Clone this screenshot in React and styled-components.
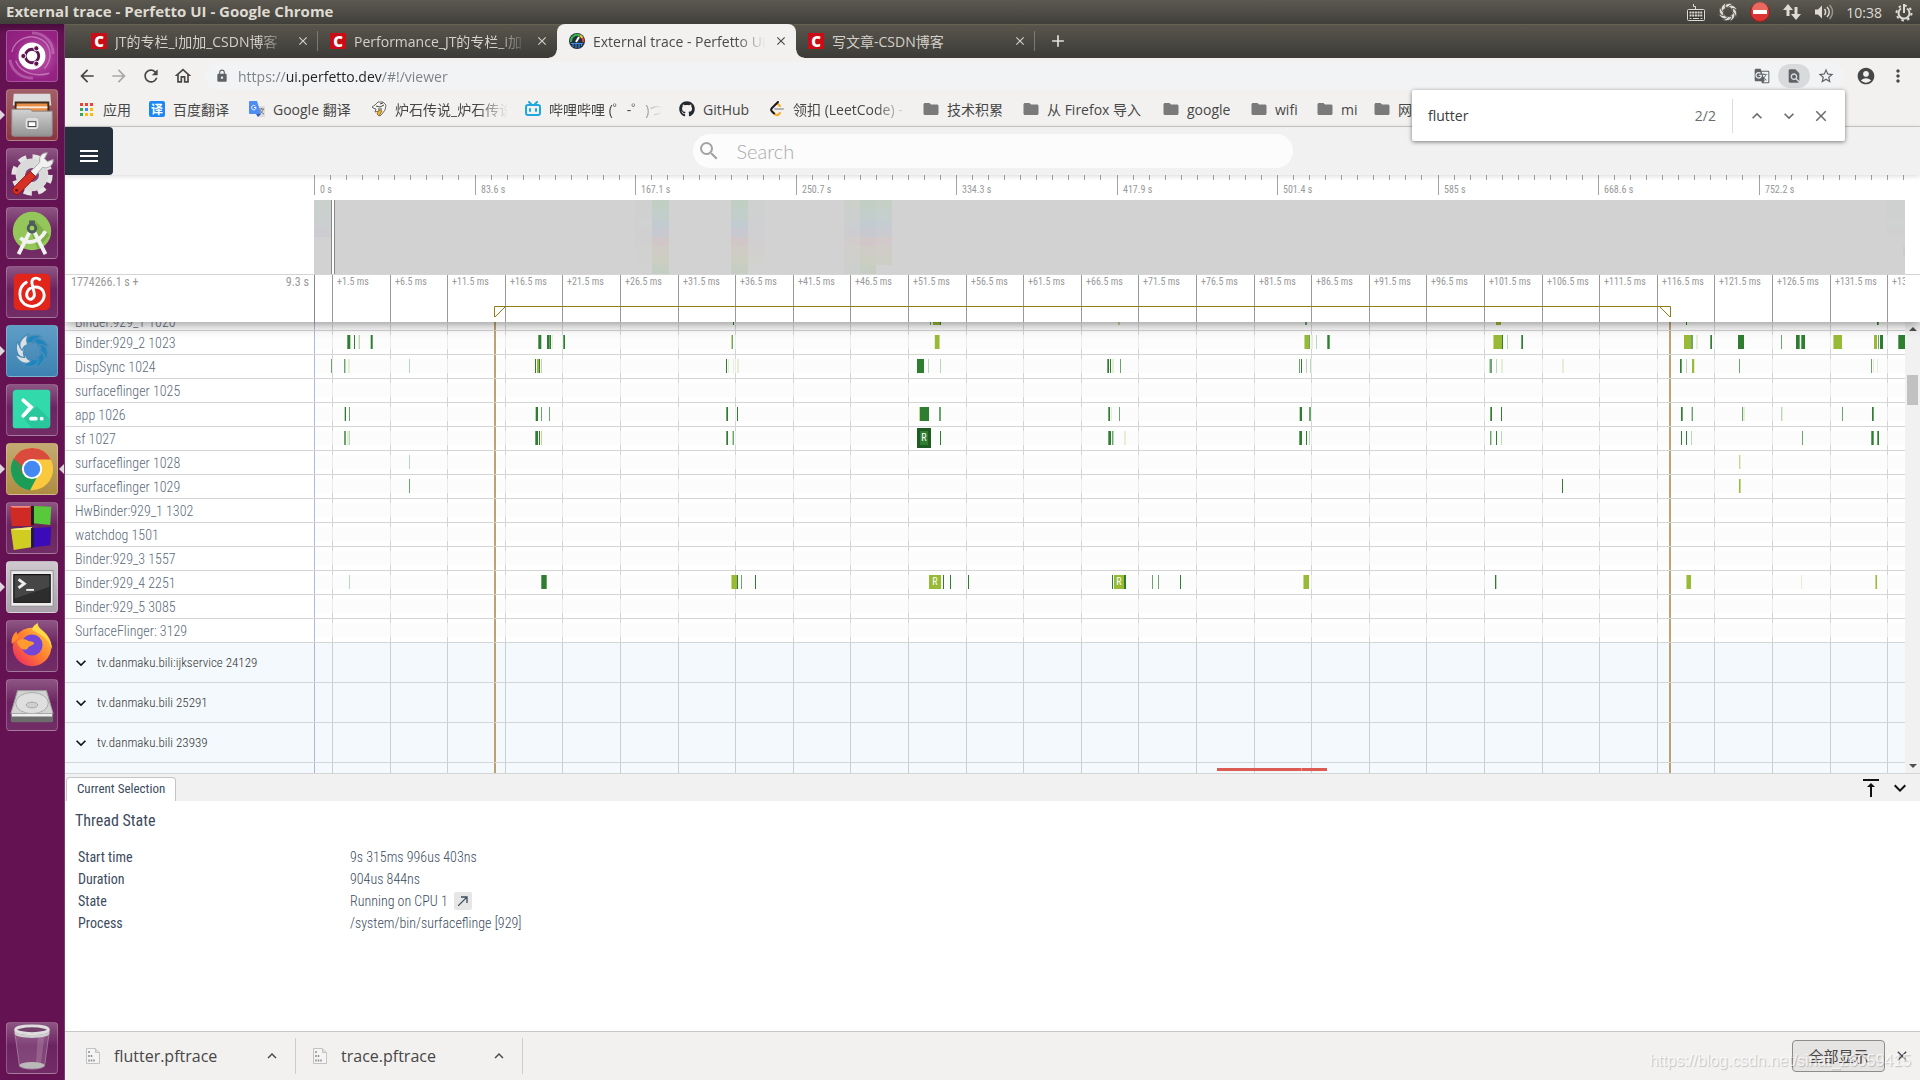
import styled, { createGlobalStyle } from 'styled-components'
import { useState } from 'react'
import { FaGithub } from 'react-icons/fa'
import {
    MdArrowBack, MdArrowForward, MdRefresh, MdOutlineHome, MdLock, MdStarBorder,
    MdAccountCircle, MdMoreVert, MdSearch, MdMenu, MdFolder, MdGTranslate,
    MdFindInPage, MdVerticalAlignTop, MdCallMade, MdKeyboardArrowUp,
    MdKeyboardArrowDown, MdClose, MdAdd
} from 'react-icons/md'

const uiFont = '"Open Sans", "Noto Sans CJK SC", sans-serif'
const traceFont = '"Roboto Condensed", "Roboto", "Noto Sans CJK SC", sans-serif'

const GlobalStyle = createGlobalStyle`
* {
    box-sizing: border-box;
}
body {
    margin: 0;
    font-family: ${uiFont};
    overflow: hidden;
}
button {
    border: 0;
    padding: 0;
    margin: 0;
    background: none;
    color: inherit;
    font: inherit;
}
a {
    color: inherit;
    text-decoration: none;
}
svg {
    display: block;
    flex: none;
}
`
const Desktop = styled.div`
display: flex;
flex-direction: column;
height: 100vh;
`
const Work = styled.div`
display: flex;
flex: 1;
min-height: 0;
`

/* ---- system bar ---- */
const SystemBar = styled.header`
display: flex;
align-items: center;
justify-content: space-between;
height: 24px;
padding: 0 6px;
background: linear-gradient(#5c5950, #403f3a);
color: #dfdbd2;
font-size: 14px;
`
const SystemTitle = styled.div`
padding-bottom: 2px;
font-size: 15px;
font-weight: 700;
`
const Indicators = styled.div`
display: flex;
align-items: center;
gap: 12px;
`

/* ---- launcher ---- */
const Launcher = styled.nav`
display: flex;
flex-direction: column;
flex: none;
gap: 7px;
width: 65px;
padding: 6px;
border-right: 1px solid #7c3c70;
background: linear-gradient(#4a0c3d, #651253 10px);
`
const LauncherItem = styled.button`
position: relative;
flex: none;
width: 52px;
height: 52px;
border: 1px solid rgba(255, 255, 255, 0.22);
border-radius: 4px;
background: ${p => p.$bg || 'linear-gradient(#8d5583, #6c2460 45%, #722c66)'};
&:last-child {
    margin-top: auto;
}
&::before {
    content: '';
    display: ${p => p.$running ? 'block' : 'none'};
    position: absolute;
    left: -7px;
    top: 20px;
    border: 5px solid transparent;
    border-left-color: #ddd6dc;
    border-right: 0;
}
&::after {
    content: '';
    display: ${p => p.$active ? 'block' : 'none'};
    position: absolute;
    right: -7px;
    top: 20px;
    border: 5px solid transparent;
    border-right-color: #ddd6dc;
    border-left: 0;
}
`

/* ---- browser ---- */
const Browser = styled.div`
display: flex;
flex-direction: column;
flex: 1;
min-width: 0;
position: relative;
background: #fff;
`
const TabStrip = styled.div`
display: flex;
align-items: center;
height: 34px;
flex: none;
padding-left: 14px;
box-shadow: inset 0 1px #66624f;
background: linear-gradient(#59564d, #3c3b37);
`
const Tab = styled.div`
position: relative;
display: flex;
align-items: center;
gap: 8px;
width: 239px;
height: 34px;
padding: 0 8px 0 12px;
border-radius: 8px 8px 0 0;
background: ${p => p.$active ? '#f2f1f0' : 'transparent'};
color: ${p => p.$active ? '#4a4a4a' : '#d4d0c8'};
font-size: 14px;
&::after {
    content: '';
    display: ${p => p.$line ? 'block' : 'none'};
    position: absolute;
    right: 0;
    top: 7px;
    height: 20px;
    border-right: 1px solid #7d7a70;
}
`
const Flare = styled.span`
position: absolute;
bottom: 0;
width: 8px;
height: 8px;
${p => p.$side}: -8px;
background: radial-gradient(circle at ${p => p.$side === 'left' ? '0 0' : '8px 0'}, transparent 7px, #f2f1f0 8px);
`
const Fade = styled.span`
flex: 1;
min-width: 0;
overflow: hidden;
white-space: nowrap;
mask-image: linear-gradient(to left, transparent, #000 30px);
`
const PlainTitle = styled.span`
flex: 1;
white-space: nowrap;
`
const Csdn = styled.span`
display: flex;
align-items: center;
justify-content: center;
flex: none;
width: 16px;
height: 16px;
background: #ca0c16;
color: #fff;
font-weight: 800;
font-size: 15px;
`
const NewTab = styled.button`
margin-left: 13px;
color: #e4e1da;
`
const Toolbar = styled.div`
display: flex;
align-items: center;
flex: none;
gap: 12px;
height: 36px;
padding: 0 12px;
background: #f2f1f0;
color: #474747;
`
const ToolButton = styled.button`
color: ${p => p.$off ? '#a9a8a7' : '#474747'};
`
const Omnibox = styled.div`
display: flex;
align-items: center;
flex: 1;
height: 28px;
padding: 0 2px 0 10px;
border-radius: 14px;
background: #f1f3f4;
color: #5f6368;
`
const Address = styled.input`
flex: 1;
border: 0;
outline: 0;
padding: 0;
margin-left: 9px;
font-family: ${uiFont};
font-size: 14px;
color: #7b7f83;
background: linear-gradient(to right, #7b7f83 48px, #202124 48px, #202124 144px, #7b7f83 144px);
background-clip: text;
-webkit-text-fill-color: transparent;
`
const OmniButton = styled.button`
display: flex;
align-items: center;
justify-content: center;
width: 32px;
height: 24px;
border-radius: 12px;
background: ${p => p.$on ? '#d8dadc' : 'transparent'};
`
const Bookmarks = styled.nav`
display: flex;
align-items: center;
flex: none;
gap: 17px;
height: 33px;
padding: 0 14px 2px;
border-bottom: 1px solid #cbc9c7;
background: #f2f1f0;
overflow: hidden;
`
const Bookmark = styled.a`
display: flex;
align-items: center;
flex: none;
gap: 8px;
width: ${p => p.$w}px;
color: #474747;
font-size: 14px;
white-space: nowrap;
`
const FolderIcon = styled(MdFolder)`
width: 18px;
height: 18px;
margin: 0 -1px;
color: #7a7a7a;
`
const Translate = styled.span`
display: flex;
align-items: center;
justify-content: center;
width: 16px;
height: 16px;
flex: none;
border-radius: 2px;
background: #1b87f5;
color: #fff;
font-size: 12px;
font-weight: 700;
`
const FindBar = styled.form`
position: absolute;
right: 75px;
top: 66px;
display: flex;
align-items: center;
width: 433px;
height: 51px;
padding: 0 8px 0 16px;
border-radius: 2px;
background: #fff;
box-shadow: 0 1px 4px rgba(0, 0, 0, 0.5);
color: #6b6b6b;
font-size: 14px;
z-index: 3;
`
const FindInput = styled.input`
flex: 1;
min-width: 0;
border: 0;
outline: 0;
padding: 0;
color: #3c3c3c;
font-family: ${uiFont};
font-size: 14px;
`
const FindLine = styled.span`
height: 34px;
margin: 0 8px 0 16px;
border-right: 1px solid #dcdcdc;
`
const FindButton = styled.button`
display: flex;
justify-content: center;
width: 32px;
`

/* ---- perfetto page ---- */
const Page = styled.main`
display: flex;
flex-direction: column;
flex: 1;
min-height: 0;
font-family: ${traceFont};
`
const Topbar = styled.div`
position: relative;
display: flex;
flex: none;
height: 48px;
padding-right: 48px;
background: #f1f1f1;
box-shadow: 0 1px 5px rgba(0, 0, 0, 0.16);
z-index: 2;
`
const MenuButton = styled.button`
display: flex;
align-items: center;
justify-content: center;
width: 48px;
height: 48px;
padding-top: 10px;
border-radius: 0 4px 4px 0;
background: #262f3c;
color: #fff;
`
const Omni = styled.label`
display: flex;
align-items: center;
gap: 16px;
width: 600px;
height: 34px;
margin: 7px auto 0;
padding-left: 4px;
border-radius: 17px;
background: #fcfcfc;
color: #a3a3a3;
`
const OmniInput = styled.input`
flex: 1;
border: 0;
outline: 0;
padding: 0;
background: transparent;
font-family: "Lato", sans-serif;
font-weight: 300;
font-size: 20px;
&::placeholder {
    color: #aaa;
}
`
const Overview = styled.section`
display: flex;
flex: none;
height: 100px;
padding-right: 15px;
border-bottom: 1px solid #d5d5d5;
`
const Shell = styled.div`
flex: none;
width: 249px;
`
const TimeRow = styled.section`
position: relative;
display: flex;
flex: none;
height: 47px;
padding-right: 15px;
box-shadow: 0 2px 12px rgba(0, 0, 0, 0.45);
clip-path: inset(0 0 -16px 0);
background: #fff;
z-index: 1;
`
const TimeShell = styled(Shell)`
display: flex;
justify-content: space-between;
padding: 0 5px 0 6px;
font-size: 12px;
line-height: 14px;
color: #999;
`
const Chart = styled.svg`
flex: 1;
width: 0;
height: 100%;
font-family: ${traceFont};
font-size: 10px;
overflow: hidden;
`
const TrackArea = styled.div`
display: flex;
flex: none;
height: 451px;
`
const Tracks = styled.div`
flex: 1;
min-width: 0;
overflow: hidden;
`
const Track = styled.div`
display: flex;
height: ${p => p.$h || 24}px;
border-bottom: 1px solid #d5d5d5;
background: ${p => p.$group ? '#f3f9fc' : '#fff'};
`
const TrackName = styled(Shell)`
display: flex;
align-items: ${p => p.$low ? 'flex-end' : 'center'};
gap: 6px;
padding-left: 10px;
color: #5c6a79;
font-size: 14px;
font-weight: 300;
white-space: nowrap;
`
const GroupName = styled(TrackName)`
padding-left: 6px;
color: #333;
font-size: 13px;
& svg {
    color: #111;
}
`
const ScrollBar = styled.div`
display: flex;
flex-direction: column;
align-items: center;
justify-content: space-between;
flex: none;
width: 15px;
padding: 5px 0;
background: #f1f1f1;
`
const ScrollArrow = styled.span`
border: 4px solid transparent;
border-${p => p.$up ? 'bottom' : 'top'}-color: #505050;
border-${p => p.$up ? 'top' : 'bottom'}-width: 0;
`
const Thumb = styled.span`
width: 11px;
height: 30px;
margin-bottom: 316px;
background: #c1c1c1;
`
const DetailTabs = styled.div`
display: flex;
align-items: flex-end;
flex: none;
gap: 5px;
height: 28px;
padding: 0 8px 0 1px;
border-top: 1px solid #d5d5d5;
background: #f1f1f1;
color: #121212;
`
const DetailTab = styled.button`
height: 24px;
margin-right: auto;
padding: 0 10px 2px;
border: 1px solid #c4c4c4;
border-bottom: 0;
border-radius: 4px 4px 0 0;
background: #fff;
color: #3c4b5d;
font-size: 13px;
`
const IconButton = styled.button`
height: 27px;
`
const Details = styled.section`
flex: 1;
min-height: 0;
padding: 8px 10px;
color: #3c4b5d;
`
const DetailHead = styled.h2`
margin: 0 0 13px;
font-size: 16px;
line-height: 24px;
font-weight: 400;
`
const DetailTable = styled.table`
border-spacing: 0;
font-size: 14px;
line-height: 22px;
& th {
    width: 272px;
    padding: 0 3px;
    text-align: left;
    font-weight: 400;
}
& td {
    padding: 0 3px;
    font-weight: 300;
}
`
const StateCell = styled.span`
display: flex;
align-items: center;
gap: 6px;
`
const Jump = styled.button`
width: 18px;
height: 18px;
padding: 1px;
border-radius: 2px;
background: #e6e6e6;
`

/* ---- download shelf ---- */
const Shelf = styled.footer`
position: relative;
display: flex;
align-items: center;
flex: none;
height: 49px;
padding-right: 10px;
border-top: 1px solid #c9c7c5;
background: #f2f1f0;
color: #474747;
font-size: 16px;
`
const Download = styled.div`
display: flex;
align-items: center;
gap: 14px;
width: ${p => p.$w}px;
height: 36px;
padding: 0 14px 0 ${p => p.$pad}px;
border-right: 1px solid #cfcdcb;
`
const FileName = styled.span`
flex: 1;
`
const ShowAll = styled.button`
width: 93px;
height: 32px;
margin: 0 9px 0 auto;
padding-bottom: 2px;
border: 1px solid #8e8c8a;
border-radius: 4px;
background: #e6e4e2;
font-size: 15px;
`
const Watermark = styled.span`
position: absolute;
right: 9px;
bottom: 10px;
color: rgba(255, 255, 255, 0.75);
text-shadow: 1px 1px 1px rgba(0, 0, 0, 0.2);
font-family: "Liberation Sans", sans-serif;
font-size: 16px;
pointer-events: none;
`

// slice colours
const C = {
    G: '#2f7d31',
    M: '#6ba46d',
    P: '#bcd6bd',
    Y: '#e6eed6',
    L: '#99ba34',
    K: '#c3d98b',
    R: '#dc5b52'
}

// [x, width, colour] measured from the left edge of the timeline
const threads = [
    { name: 'Binder:929_1 1020', slices: [[419, 1, 'G'], [616, 1, 'M'], [619, 7, 'L'], [626, 1, 'G'], [804, 2, 'K'], [991, 2, 'M'], [1182, 5, 'L'], [1372, 1, 'G'], [1563, 1, 'G'], [1564, 1, 'M']] },
    { name: 'Binder:929_2 1023', slices: [[33, 1, 'M'], [34, 2, 'G'], [36, 1, 'P'], [40, 1, 'G'], [44, 1, 'Y'], [45, 1, 'P'], [56, 1, 'P'], [57, 1, 'G'], [58, 1, 'M'], [224, 1, 'M'], [225, 2, 'G'], [227, 1, 'P'], [233, 2, 'G'], [235, 1, 'M'], [236, 1, 'G'], [238, 1, 'Y'], [249, 1, 'M'], [250, 1, 'G'], [417, 1, 'K'], [418, 1, 'M'], [620, 1, 'Y'], [621, 4, 'L'], [625, 1, 'K'], [990, 1, 'K'], [991, 4, 'L'], [995, 1, 'M'], [998, 1, 'Y'], [1002, 1, 'P'], [1013, 1, 'M'], [1014, 1, 'G'], [1015, 1, 'M'], [1179, 1, 'K'], [1180, 8, 'L'], [1188, 1, 'G'], [1193, 1, 'P'], [1207, 1, 'M'], [1208, 1, 'G'], [1370, 7, 'L'], [1377, 2, 'M'], [1382, 2, 'Y'], [1396, 1, 'M'], [1397, 1, 'G'], [1424, 6, 'G'], [1467, 1, 'M'], [1482, 3, 'G'], [1485, 1, 'M'], [1487, 1, 'M'], [1488, 3, 'G'], [1519, 1, 'K'], [1520, 8, 'L'], [1560, 3, 'L'], [1564, 1, 'M'], [1566, 3, 'G'], [1584, 1, 'M'], [1585, 6, 'G']] },
    { name: 'DispSync 1024', slices: [[17, 1, 'M'], [30, 1, 'M'], [31, 1, 'P'], [34, 2, 'Y'], [95, 1, 'P'], [221, 1, 'G'], [223, 2, 'L'], [225, 1, 'G'], [227, 1, 'P'], [412, 1, 'G'], [414, 1, 'Y'], [419, 1, 'Y'], [423, 2, 'Y'], [603, 7, 'G'], [614, 1, 'P'], [626, 1, 'P'], [793, 1, 'M'], [794, 1, 'G'], [796, 1, 'G'], [798, 2, 'Y'], [806, 1, 'M'], [985, 1, 'M'], [987, 1, 'G'], [992, 1, 'P'], [996, 1, 'P'], [1175, 1, 'P'], [1176, 2, 'M'], [1182, 1, 'P'], [1187, 2, 'Y'], [1248, 2, 'Y'], [1366, 1, 'G'], [1367, 1, 'M'], [1372, 1, 'P'], [1378, 2, 'L'], [1380, 1, 'Y'], [1425, 1, 'M'], [1557, 1, 'M'], [1559, 1, 'Y'], [1563, 1, 'Y']] },
    { name: 'surfaceflinger 1025', slices: [] },
    { name: 'app 1026', slices: [[30, 1, 'P'], [31, 1, 'G'], [35, 1, 'M'], [221, 1, 'P'], [222, 2, 'G'], [227, 1, 'M'], [235, 1, 'M'], [412, 1, 'M'], [413, 1, 'G'], [423, 1, 'G'], [605, 1, 'K'], [606, 9, 'G'], [625, 2, 'M'], [794, 1, 'M'], [795, 1, 'G'], [797, 1, 'Y'], [805, 1, 'M'], [985, 1, 'P'], [986, 2, 'G'], [995, 2, 'M'], [1176, 1, 'M'], [1177, 1, 'G'], [1187, 1, 'G'], [1367, 1, 'G'], [1368, 1, 'M'], [1377, 1, 'P'], [1378, 1, 'M'], [1428, 1, 'M'], [1429, 2, 'Y'], [1467, 1, 'P'], [1468, 1, 'Y'], [1528, 1, 'M'], [1558, 1, 'G'], [1559, 1, 'M']] },
    { name: 'sf 1027', slices: [[30, 1, 'M'], [31, 1, 'M'], [33, 2, 'Y'], [35, 1, 'P'], [221, 1, 'M'], [222, 2, 'G'], [225, 1, 'G'], [227, 1, 'K'], [412, 1, 'M'], [413, 1, 'G'], [418, 1, 'P'], [419, 1, 'M'], [626, 1, 'G'], [794, 1, 'M'], [795, 2, 'G'], [798, 1, 'M'], [799, 1, 'P'], [810, 2, 'Y'], [985, 1, 'M'], [986, 2, 'G'], [992, 1, 'G'], [995, 1, 'P'], [1176, 1, 'M'], [1177, 1, 'P'], [1182, 1, 'G'], [1187, 1, 'P'], [1367, 1, 'G'], [1372, 1, 'G'], [1377, 1, 'P'], [1488, 1, 'M'], [1557, 1, 'M'], [1558, 1, 'G'], [1559, 1, 'M'], [1563, 1, 'M'], [1564, 1, 'G']], picked: 603 },
    { name: 'surfaceflinger 1028', slices: [[95, 1, 'P'], [1425, 1, 'K'], [1426, 1, 'Y']] },
    { name: 'surfaceflinger 1029', slices: [[95, 1, 'M'], [1248, 1, 'G'], [1425, 1, 'L'], [1426, 1, 'K']] },
    { name: 'HwBinder:929_1 1302', slices: [] },
    { name: 'watchdog 1501', slices: [] },
    { name: 'Binder:929_3 1557', slices: [] },
    { name: 'Binder:929_4 2251', slices: [[35, 1, 'P'], [227, 1, 'M'], [228, 4, 'G'], [232, 1, 'M'], [417, 1, 'K'], [418, 5, 'L'], [423, 1, 'G'], [427, 1, 'M'], [441, 1, 'G'], [615, 12, 'L'], [629, 1, 'G'], [636, 1, 'G'], [654, 1, 'G'], [798, 1, 'G'], [800, 10, 'L'], [810, 2, 'G'], [838, 1, 'M'], [844, 1, 'M'], [866, 1, 'G'], [989, 1, 'K'], [990, 5, 'L'], [1181, 1, 'G'], [1182, 1, 'P'], [1372, 1, 'K'], [1373, 4, 'L'], [1487, 1, 'Y'], [1561, 1, 'K'], [1562, 1, 'L']], marks: [621, 805] },
    { name: 'Binder:929_5 3085', slices: [] },
    { name: 'SurfaceFlinger: 3129', slices: [] }
]
const groups = ['tv.danmaku.bili:ijkservice 24129', 'tv.danmaku.bili 25291', 'tv.danmaku.bili 23939']
const overviewLabels = ['0 s', '83.6 s', '167.1 s', '250.7 s', '334.3 s', '417.9 s', '501.4 s', '585 s', '668.6 s', '752.2 s']
const bands = ['#bfcdc1', '#bfcdc9', '#c0cace', '#c6c6d0', '#d0c5c6', '#cecac3', '#cbcdc0', '#c4ccc1']
// [x, width, opacity, first band, last band]
const loads = [[0, 17, 0.4, 0, 3], [321, 17, 0.1, 0, 6], [338, 17, 0.9, 0, 7], [417, 17, 0.9, 0, 7], [434, 17, 0.2, 0, 6], [530, 16, 0.35, 0, 7], [546, 16, 0.9, 0, 7], [562, 16, 0.7, 0, 6], [1573, 18, 0.1, 0, 3], [1589, 2, 0.9, 5, 5]]
const bandY = i => 25 + Math.round(i * 9.25)
const tickX = Array.from({ length: 28 }, (_, k) => Math.round(18 + k * 57.6))

function GridLines({ h }) {
    return (
        <g fill="#000" fillOpacity="0.17">
            <rect x="0" width="1" height={h} fill="#9aa8c8" fillOpacity="0.8" />
            {tickX.map(x => <rect key={x} x={x} width="1" height={h} />)}
        </g>
    )
}

function AreaLines({ h }) {
    return (
        <g fill="#8a5a00" fillOpacity="0.55">
            <rect x="180" width="2" height={h} />
            <rect x="1355" width="2" height={h} />
        </g>
    )
}

function Thread({ thread, cut }) {
    return (
        <Track $h={cut ? 9 : 24}>
            <TrackName $low={cut}>{thread.name}</TrackName>
            <Chart>
                <GridLines h="24" />
                <g transform={cut ? 'translate(0 -15)' : undefined}>
                    <rect x="1" y="4" width="100%" height="14" fill="#fafafa" fillOpacity="0.6" />
                    {thread.slices.map(([x, w, c]) => <rect key={x} x={x} y="4" width={w} height="14" fill={C[c]} />)}
                    {thread.marks && thread.marks.map(x => (
                        <text key={x} x={x} y="14" textAnchor="middle" fill="#fff">R</text>
                    ))}
                    {thread.picked && (
                        <g>
                            <rect x={thread.picked} y="1" width="14" height="20" fill="#1f5c22" />
                            <rect x={thread.picked + 3} y="4" width="8" height="14" fill={C.G} />
                            <text x={thread.picked + 7} y="14" textAnchor="middle" fill="#fff">R</text>
                        </g>
                    )}
                </g>
                <AreaLines h="24" />
            </Chart>
        </Track>
    )
}

function OverviewTimeline() {
    return (
        <Overview>
            <Shell />
            <Chart>
                {Array.from({ length: 100 }, (_, k) => (
                    <rect key={k} x={Math.round(k * 16.05)} width="1" height={k % 10 ? 5 : 20} fill="#a3a3a3" />
                ))}
                {overviewLabels.map((t, k) => (
                    <text key={t} x={Math.round(k * 160.5) + 6} y="18" fill="#999">{t}</text>
                ))}
                <rect y="25" width="100%" height="75" fill="#d2d2d2" />
                {loads.map(([x, w, o, from, to]) => bands.map((c, i) => (i >= from && i <= to) && (
                    <rect key={x + c} x={x} y={bandY(i)} width={w} height={bandY(i + 1) - bandY(i)} fill={c} fillOpacity={o} />
                )))}
                <rect x="17" y="25" width="1" height="75" fill="#888" />
                <rect x="18" y="25" width="2" height="75" fill="#fff" />
                <rect x="20" y="25" width="1" height="75" fill="#888" />
            </Chart>
        </Overview>
    )
}

function TimeAxis() {
    return (
        <TimeRow>
            <TimeShell><span>1774266.1 s +</span><span>9.3 s</span></TimeShell>
            <Chart>
                <rect x="0" width="1" height="47" fill="#888" />
                {tickX.map((x, k) => (
                    <g key={x}>
                        <rect x={x} width="1" height="47" fill="#999" />
                        <text x={x + 5} y="10" fill="#999">+{k * 5 + 1}.5 ms</text>
                    </g>
                ))}
                <path d="M180.5 42V31.5H1356.5V42M181 42L191 32M1356 42L1346 32" fill="none" stroke="#917d10" />
            </Chart>
        </TimeRow>
    )
}

/* ---- small drawings ---- */
const AppsIcon = () => (
    <svg width="16" height="16">
        {['#ea4335', '#ea4335', '#ea4335', '#34a853', '#4285f4', '#fbbc05', '#34a853', '#fbbc05', '#fbbc05'].map((c, i) => (
            <rect key={i} x={1 + (i % 3) * 5} y={2 + Math.floor(i / 3) * 5} width="3" height="3" fill={c} />
        ))}
    </svg>
)
const GoogleIcon = () => (
    <svg width="16" height="16" viewBox="0 0 16 16">
        <path d="M7 5h9v11H9z" fill="#dcdcdc" />
        <path d="M10 8h5M12.500 7v1M14 8c0 2-2 4-3 5M11 9c1 2 2 3 4 4" stroke="#777" fill="none" />
        <path d="M1 0h7l4 13H1a1 1 0 0 1-1-1V1a1 1 0 0 1 1-1z" fill="#4f8df5" />
        <path d="M7 13h5l-3 3z" fill="#3457b8" />
        <path d="M7 6.500H5M7 6.500A2.200 2.200 0 1 1 6.300 5" stroke="#fff" fill="none" />
    </svg>
)
const HearthIcon = () => (
    <svg width="16" height="16" viewBox="0 0 16 16" fill="none" stroke="#6b6b6b">
        <path d="M1 6l3-2 3-3h5l3 3-1 5-3 4-2 2-2-1 1-4-4 1 1-3-3-1z" fill="#f7f5ef" />
        <path d="M5 5l4 1 4-2M9 3l3-1M7 8l4 0" stroke="#444" />
        <path d="M8 9l3 1-3 5-2-2z" fill="#e9b53a" stroke="#a1721a" />
    </svg>
)
const BiliIcon = () => (
    <svg width="16" height="16" viewBox="0 0 16 16" fill="none" stroke="#20a8de" strokeWidth="2" strokeLinecap="round">
        <rect x="1" y="4" width="14" height="10" rx="2" />
        <path d="M4 1l2 2M12 1l-2 2M5 8v2M11 8v2" />
    </svg>
)
const LeetIcon = () => (
    <svg width="16" height="16" viewBox="0 0 16 16" fill="none" strokeWidth="2" strokeLinecap="round">
        <path d="M6 8h8" stroke="#b3b1b0" />
        <path d="M11 5L9.500 3.500a2 2 0 0 0-3 0M11 12l-1.500 1.500a2 2 0 0 1-3 0L4 11" stroke="#f9a824" />
        <path d="M9 1L3 7a2.500 2.500 0 0 0 0 3.500l2 2" stroke="#1c1c1c" />
    </svg>
)
const PerfettoIcon = () => (
    <svg width="16" height="16" viewBox="0 0 16 16">
        <circle cx="8" cy="8" r="8" fill="#23303f" />
        <path d="M2 9a6 6 0 0 1 2-5.500" stroke="#39b54a" strokeWidth="2" fill="none" />
        <path d="M4 3.500a6 6 0 0 1 7-1" stroke="#39b54a" strokeWidth="2" fill="none" />
        <path d="M11 2.500A6 6 0 0 1 13.500 5" stroke="#f4c430" strokeWidth="2" fill="none" />
        <path d="M13.500 5A6 6 0 0 1 14 9" stroke="#e5432f" strokeWidth="2" fill="none" />
        <path d="M2 10.500h12M4 11v3M7 11v4M10 11v4M12.500 11v2" stroke="#3f8fe0" />
        <path d="M7 9l3-5" stroke="#fff" strokeWidth="2" />
    </svg>
)
const FileIcon = () => (
    <svg width="14" height="16" viewBox="0 0 14 16">
        <path d="M.5.500h9l4 4v11H.5z" fill="#f4f4f4" stroke="#c3c3c3" />
        <path d="M9.500.500v4h4" fill="#dedede" stroke="#c3c3c3" />
        <path d="M3 3v2M3 7v2M5.500 7v2M3 11.500v2M5.500 11.500v2M8 11.500v2" stroke="#8f8f8f" strokeWidth="1.500" />
    </svg>
)
const KeyboardIcon = () => (
    <svg width="20" height="20" viewBox="0 0 20 20" fill="none" stroke="#dfdbd2">
        <rect x="1.500" y="7.500" width="17" height="11" rx="1" fill="#3a3935" />
        <path d="M9.500 7V4.500h-2V2" />
        <path d="M3.500 10.500h13M3.500 13.500h13" strokeWidth="2" strokeDasharray="2 .7" />
        <path d="M3.500 16.500h2M7 16.500h6M14.500 16.500h2" />
    </svg>
)
function Swirl({ size, a, b, gap }) {
    return (
        <svg width={size} height={size} viewBox="0 0 40 40" stroke={gap} strokeWidth="1.500" strokeLinejoin="round">
            {[0, 1, 2, 3, 4, 5, 6, 7].map(i => (
                <path key={i} transform={`rotate(${i * 45} 20 20)`} d="M13 12C12 5 20 0 31 4c-4 1-8 3-9 8-3-2-6-2-9 0z" fill={i > 4 ? b : a} />
            ))}
        </svg>
    )
}
const NoEntry = () => (
    <svg width="20" height="20" viewBox="0 0 20 20">
        <circle cx="10" cy="10" r="9.500" fill="#dc3434" stroke="#a01c1c" />
        <path d="M2 8a8 8 0 0 1 16 0z" fill="#ee7f72" fillOpacity=".7" />
        <rect x="3" y="8" width="14" height="4" fill="#fff" />
    </svg>
)
const Network = () => (
    <svg width="20" height="18" viewBox="0 0 20 18" fill="#dfdbd2">
        <path d="M6 1l5 6H7.500v6h-3V7H1zM14 17l-5-6h3.500V4h3v7H19z" />
    </svg>
)
const Speaker = () => (
    <svg width="20" height="18" viewBox="0 0 20 18" fill="none" stroke="#dfdbd2" strokeWidth="1.500">
        <path d="M1 6.500h3l4-4v13l-4-4H1z" fill="#dfdbd2" stroke="none" />
        <path d="M10.500 6c1.500 2 1.500 4 0 6M13 4c3 3 3 7 0 10" />
        <path d="M15.500 2c4 4 4 10 0 14" strokeOpacity=".5" />
    </svg>
)
const Power = () => (
    <svg width="20" height="20" viewBox="0 0 20 20" fill="none" stroke="#dfdbd2">
        <circle cx="10" cy="11" r="7.500" strokeWidth="2" strokeDasharray="2.500 3.390" />
        <path d="M7 6.500a5.500 5.500 0 1 0 6 0M10 2v9" strokeWidth="2" />
    </svg>
)

const art = {
    dash: (
        <>
            <path d="M5 22C8 8 24 2 36 9c10 6 12 20 3 30M44 44c-14 4-30 0-35-13" fill="none" stroke="#d9a5cf" strokeOpacity=".6" strokeWidth="1.500" />
            <path d="M26 2c14 0 22 10 22 22M3 30c2 12 12 19 24 19" fill="none" stroke="#d9a5cf" strokeOpacity=".4" strokeWidth="3" />
            <circle cx="26" cy="26" r="14" fill="#fff" />
            <circle cx="26" cy="26" r="7" fill="none" stroke="#5f1550" strokeWidth="3" />
            <g fill="#5f1550" stroke="#fff"><circle cx="17" cy="26" r="2.700" /><circle cx="30.500" cy="18" r="2.700" /><circle cx="30.500" cy="34" r="2.700" /></g>
        </>
    ),
    files: (
        <>
            <path d="M7 4h38l1 12H6z" fill="#dcdcdc" />
            <path d="M8 12h36v10H8z" fill="#3a2c20" />
            <path d="M10 14h32v8H10z" fill="#e98f45" /><path d="M10 17h32v2H10z" fill="#fff" fillOpacity=".8" />
            <path d="M5 20h19l2 2h21v24a2 2 0 0 1-2 2H7a2 2 0 0 1-2-2z" fill="url(#steel)" stroke="#8c8c8c" />
            <rect x="20" y="30" width="12" height="10" rx="2" fill="#d6d6d6" stroke="#eee" />
            <rect x="22" y="33" width="8" height="5" fill="#fff" stroke="#444" />
        </>
    ),
    settings: (
        <>
            <circle cx="26" cy="27" r="18" fill="none" stroke="#e4e4e4" strokeWidth="7" strokeDasharray="8 6.137" />
            <circle cx="26" cy="27" r="12" fill="none" stroke="#dadada" strokeWidth="10" />
            <circle cx="26" cy="27" r="7" fill="#82447a" />
            <path d="M34 9a8 8 0 0 1 8-5l-3 6 3 3 6-2a8 8 0 0 1-11 8L27 31l-5-5 12-12z" fill="#f1f1f1" stroke="#a8a8a8" />
            <path d="M24 23l6 6-17 17a4 4 0 0 1-6-6z" fill="#d62f25" stroke="#931510" />
            <circle cx="10" cy="43" r="1.500" fill="#671410" />
        </>
    ),
    studio: (
        <>
            <circle cx="26" cy="24" r="20" fill="#94c659" />
            <path d="M29 13l15 15-12 15-8-20z" fill="#6fa03c" fillOpacity=".6" />
            <path d="M24 24L12 48M28 24l12 24" stroke="#f2f2f2" strokeWidth="4" />
            <path d="M14 31c6 7 19 6 26-7" fill="none" stroke="#f2f2f2" strokeWidth="4" />
            <rect x="23" y="13" width="6" height="5" fill="#505b60" />
            <circle cx="26" cy="21" r="4" fill="#9ad05a" stroke="#505b60" strokeWidth="3" />
        </>
    ),
    music: (
        <>
            <rect x="7" y="7" width="38" height="38" rx="5" fill="#e1251b" />
            <path d="M20 16c-9 5-9 20 1 24 11 4 20-6 17-14-3-7-14-7-17 0-2 5 2 9 5 7 5-3 1-9 0-16-1-5 4-7 8-4" fill="none" stroke="#fff" strokeWidth="3" strokeLinecap="round" />
        </>
    ),
    term2: (
        <>
            <path d="M10 5h32q3 0 3 3v33q0 4-4 4H9q-3 0-3-3V9q0-4 4-4z" fill="#32d9aa" />
            <path d="M17 34l14-12 14 14v5q0 4-4 4H26z" fill="#21b58e" fillOpacity=".5" />
            <path d="M17 16l8 7-8 9" fill="none" stroke="#fff" strokeWidth="4" strokeLinecap="round" />
            <path d="M25 35h5M36 35h.1" stroke="#fff" strokeWidth="4" strokeLinecap="round" />
        </>
    ),
    chrome: (
        <>
            <circle cx="26" cy="26" r="22" fill="#f9c83c" />
            <path d="M26 26L7 15A22 22 0 0 1 45.500 16H26z" fill="#da4b3e" />
            <path d="M7 15a22 22 0 0 0 17 33l9-17-14-1z" fill="#1b9c57" />
            <path d="M7 15l9 16 10-15z" fill="#da4b3e" /><path d="M7 15l11 17 8 0z" fill="#1b9c57" />
            <circle cx="26" cy="26" r="10.500" fill="#fff" />
            <circle cx="26" cy="26" r="8.500" fill="#4488f2" />
        </>
    ),
    cubes: (
        <>
            <path d="M3 3h22v21H5z" fill="#cf2a23" /><path d="M3 3h22l-2 2H6z" fill="#f08c86" />
            <path d="M28 3l18 1-1 19-17-2z" fill="#59c93c" /><path d="M25 3h3v20h-3z" fill="#241b22" />
            <path d="M4 27l22-2-1 21-18 3z" fill="#d0cc22" /><path d="M4 27l22-2-2 3H8z" fill="#eeec80" />
            <path d="M28 26l18-1-1 19-17 2z" fill="#3c0bb8" /><path d="M25 26h3v20l-3 1z" fill="#211a40" />
        </>
    ),
    term: (
        <>
            <rect x="4" y="9" width="44" height="37" fill="#ececec" stroke="#8e8e8e" />
            <rect x="7" y="13" width="38" height="29" fill="#2d2d2d" stroke="#111" />
            <path d="M8 14h36v12L8 38z" fill="#fff" fillOpacity=".12" />
            <path d="M12 18l6 4.500-6 4.500" fill="none" stroke="#eee" strokeWidth="3" />
            <path d="M20 29h8" stroke="#eee" strokeWidth="2" />
        </>
    ),
    firefox: (
        <>
            <circle cx="26" cy="27" r="20" fill="url(#fox)" />
            <path d="M26 9c1-5 5-6 6-7 0 5 4 6 7 10 1 2 8 8 8 18-3-12-12-16-21-21z" fill="#ffd94a" />
            <path d="M5 24c-1-6 2-11 5-13 0 3 2 4 3 6z" fill="#ff8b2c" />
            <circle cx="26" cy="25" r="11" fill="#7446d8" />
            <path d="M10 21c5-4 10-2 13 0 3 0 6 1 5 3-3 2-5 2-7 5-4 2-9-1-11-8z" fill="#ff9a30" />
        </>
    ),
    disk: (
        <>
            <path d="M11 11h30l7 24H4z" fill="#d3d3d3" stroke="#9b9b9b" />
            <ellipse cx="26" cy="24" rx="17" ry="11" fill="#dfdfdf" stroke="#aaa" />
            <ellipse cx="26" cy="26" rx="6" ry="3" fill="#cfcfcf" stroke="#a5a5a5" />
            <path d="M4 35h44v7q0 2-2 2H6q-2 0-2-2z" fill="#6d6d6d" /><path d="M5 35h42v3H5z" fill="#efefef" />
        </>
    ),
    trash: (
        <>
            <path d="M8 9h36l-5 36c-4 4-22 4-26 0z" fill="#e9dce7" fillOpacity=".17" stroke="#c6b0c2" strokeOpacity=".5" />
            <path d="M32 14l7 0-4 30h-5z" fill="#fff" fillOpacity=".15" />
            <ellipse cx="26" cy="44" rx="13" ry="3.500" fill="#bababa" />
            <path d="M8 8c0 6 36 6 36 0v3c0 6-36 6-36 0z" fill="#cfcfcf" />
            <ellipse cx="26" cy="7" rx="17" ry="4" fill="#74416b" stroke="#dedede" strokeWidth="3" />
        </>
    )
}
const launcher = [
    { id: 'dash', label: 'Dash', bg: 'radial-gradient(circle at 60% 50%, #c45fb5, #962384 60%, #8c2079)' },
    { id: 'files', label: 'Files', bg: 'linear-gradient(#a25f68, #8b3640)', running: true },
    { id: 'settings', label: 'Settings' },
    { id: 'studio', label: 'Android Studio' },
    { id: 'music', label: 'Music' },
    { id: 'swirl', label: 'Shutter', bg: 'linear-gradient(#5f9dc5, #3c82b2)', running: true },
    { id: 'term2', label: 'Shell' },
    { id: 'chrome', label: 'Chrome', bg: 'linear-gradient(#c4ab73, #ae8d42)', running: true, active: true },
    { id: 'cubes', label: 'Blocks' },
    { id: 'term', label: 'Terminal', bg: 'linear-gradient(#cfc8cf, #a9a0a9)', running: true },
    { id: 'firefox', label: 'Firefox' },
    { id: 'disk', label: 'Disk' },
    { id: 'trash', label: 'Trash' }
]
const SwirlBox = styled.span`
display: flex;
justify-content: center;
`

function Sidebar() {
    return (
        <Launcher>
            {launcher.map(l => (
                <LauncherItem key={l.id} aria-label={l.label} $bg={l.bg} $running={l.running} $active={l.active}>
                    {l.id === 'swirl'
                        ? <SwirlBox><Swirl size={36} a="#1f86bd" b="#dcdfe3" gap="#4a8cb8" /></SwirlBox>
                        : (
                            <svg width="50" height="50" viewBox="0 0 52 52">
                                <defs>
                                    <linearGradient id="steel" x2="0" y2="1"><stop stopColor="#d2d2d2" /><stop offset="1" stopColor="#949494" /></linearGradient>
                                    <linearGradient id="fox" x1="1" x2="0" y2="1"><stop stopColor="#ffd23d" /><stop offset=".5" stopColor="#ff7b30" /><stop offset="1" stopColor="#ec1f6c" /></linearGradient>
                                </defs>
                                {art[l.id]}
                            </svg>
                        )}
                </LauncherItem>
            ))}
        </Launcher>
    )
}

function App() {
    const [find, setFind] = useState('flutter')
    const [url, setUrl] = useState('https://ui.perfetto.dev/#!/viewer')
    return (
        <Desktop>
            <GlobalStyle />
            <SystemBar>
                <SystemTitle>External trace - Perfetto UI - Google Chrome</SystemTitle>
                <Indicators>
                    <KeyboardIcon /><Swirl size={20} a="#dfdbd2" b="#dfdbd2" gap="#4b4943" /><NoEntry /><Network /><Speaker />
                    <span>10:38</span>
                    <Power />
                </Indicators>
            </SystemBar>
            <Work>
                <Sidebar />
                <Browser>
                    <TabStrip>
                        <Tab $line><Csdn>C</Csdn><Fade>JT的专栏_i加加_CSDN博客</Fade><button aria-label="Close"><MdClose size={14} /></button></Tab>
                        <Tab><Csdn>C</Csdn><Fade>Performance_JT的专栏_i加</Fade><button aria-label="Close"><MdClose size={14} /></button></Tab>
                        <Tab $active><Flare $side="left" /><PerfettoIcon /><Fade>External trace - Perfetto UI</Fade><button aria-label="Close"><MdClose size={14} /></button><Flare $side="right" /></Tab>
                        <Tab $line><Csdn>C</Csdn><PlainTitle>写文章-CSDN博客</PlainTitle><button aria-label="Close"><MdClose size={14} /></button></Tab>
                        <NewTab aria-label="New tab"><MdAdd size={20} /></NewTab>
                    </TabStrip>
                    <Toolbar>
                        <ToolButton aria-label="Back"><MdArrowBack size={20} /></ToolButton>
                        <ToolButton $off aria-label="Forward"><MdArrowForward size={20} /></ToolButton>
                        <ToolButton aria-label="Reload"><MdRefresh size={20} /></ToolButton>
                        <ToolButton aria-label="Home"><MdOutlineHome size={20} /></ToolButton>
                        <Omnibox>
                            <MdLock size={14} />
                            <Address aria-label="Address" value={url} onChange={e => setUrl(e.target.value)} />
                            <OmniButton aria-label="Translate"><MdGTranslate size={16} /></OmniButton>
                            <OmniButton $on aria-label="Find"><MdFindInPage size={16} /></OmniButton>
                            <OmniButton aria-label="Star"><MdStarBorder size={18} /></OmniButton>
                        </Omnibox>
                        <ToolButton aria-label="Profile"><MdAccountCircle size={20} /></ToolButton>
                        <ToolButton aria-label="More"><MdMoreVert size={20} /></ToolButton>
                    </Toolbar>
                    <Bookmarks>
                        <Bookmark href="#" $w={53}><AppsIcon />应用</Bookmark>
                        <Bookmark href="#" $w={83}><Translate>译</Translate>百度翻译</Bookmark>
                        <Bookmark href="#" $w={105}><GoogleIcon />Google 翻译</Bookmark>
                        <Bookmark href="#" $w={137}><HearthIcon /><Fade>炉石传说_炉石传说</Fade></Bookmark>
                        <Bookmark href="#" $w={137}><BiliIcon /><Fade>哔哩哔哩 (゜-゜)つロ</Fade></Bookmark>
                        <Bookmark href="#" $w={73}><FaGithub size={16} color="#24292e" />GitHub</Bookmark>
                        <Bookmark href="#" $w={137}><LeetIcon /><Fade>领扣 (LeetCode) -</Fade></Bookmark>
                        <Bookmark href="#" $w={83}><FolderIcon />技术积累</Bookmark>
                        <Bookmark href="#" $w={123}><FolderIcon />从 Firefox 导入</Bookmark>
                        <Bookmark href="#" $w={71}><FolderIcon />google</Bookmark>
                        <Bookmark href="#" $w={49}><FolderIcon />wifi</Bookmark>
                        <Bookmark href="#" $w={40}><FolderIcon />mi</Bookmark>
                        <Bookmark href="#" $w={55}><FolderIcon />网</Bookmark>
                    </Bookmarks>
                    <FindBar>
                        <FindInput aria-label="Find in page" value={find} onChange={e => setFind(e.target.value)} />
                        <span>2/2</span>
                        <FindLine />
                        <FindButton type="button" aria-label="Previous"><MdKeyboardArrowUp size={20} /></FindButton>
                        <FindButton type="button" aria-label="Next"><MdKeyboardArrowDown size={20} /></FindButton>
                        <FindButton type="button" aria-label="Close"><MdClose size={18} /></FindButton>
                    </FindBar>
                    <Page>
                        <Topbar>
                            <MenuButton aria-label="Menu"><MdMenu size={24} /></MenuButton>
                            <Omni>
                                <MdSearch size={24} />
                                <OmniInput placeholder="Search" aria-label="Search" />
                            </Omni>
                        </Topbar>
                        <OverviewTimeline />
                        <TimeAxis />
                        <TrackArea>
                            <Tracks>
                                {threads.map((t, i) => <Thread key={t.name} thread={t} cut={i === 0} />)}
                                {groups.map(g => (
                                    <Track key={g} $h={40} $group>
                                        <GroupName><MdKeyboardArrowDown size={20} />{g}</GroupName>
                                        <Chart><GridLines h="40" /><AreaLines h="40" /></Chart>
                                    </Track>
                                ))}
                                <Track $h={40} $group>
                                    <Shell />
                                    <Chart>
                                        <GridLines h="40" />
                                        <rect x="903" y="5" width="84" height="3" fill={C.R} />
                                        <rect x="987" y="5" width="1" height="3" fill="#e98d87" />
                                        <rect x="988" y="5" width="25" height="3" fill={C.R} />
                                        <AreaLines h="40" />
                                    </Chart>
                                </Track>
                            </Tracks>
                            <ScrollBar><ScrollArrow $up /><Thumb /><ScrollArrow /></ScrollBar>
                        </TrackArea>
                        <DetailTabs>
                            <DetailTab>Current Selection</DetailTab>
                            <IconButton aria-label="Expand"><MdVerticalAlignTop size={24} /></IconButton>
                            <IconButton aria-label="Collapse"><MdKeyboardArrowDown size={24} /></IconButton>
                        </DetailTabs>
                        <Details>
                            <DetailHead>Thread State</DetailHead>
                            <DetailTable>
                                <tbody>
                                    <tr><th>Start time</th><td>9s 315ms 996us 403ns</td></tr>
                                    <tr><th>Duration</th><td>904us 844ns</td></tr>
                                    <tr><th>State</th><td><StateCell>Running on CPU 1<Jump aria-label="Go to CPU slice"><MdCallMade size={16} /></Jump></StateCell></td></tr>
                                    <tr><th>Process</th><td>/system/bin/surfaceflinge [929]</td></tr>
                                </tbody>
                            </DetailTable>
                        </Details>
                    </Page>
                    <Shelf>
                        <Download $w={231} $pad={21}><FileIcon /><FileName>flutter.pftrace</FileName><button aria-label="Options"><MdKeyboardArrowUp size={18} /></button></Download>
                        <Download $w={227} $pad={17}><FileIcon /><FileName>trace.pftrace</FileName><button aria-label="Options"><MdKeyboardArrowUp size={18} /></button></Download>
                        <ShowAll>全部显示</ShowAll>
                        <button aria-label="Close"><MdClose size={16} /></button>
                        <Watermark>https://blog.csdn.net/sinat_26059415</Watermark>
                    </Shelf>
                </Browser>
            </Work>
        </Desktop>
    )
}

export default App
